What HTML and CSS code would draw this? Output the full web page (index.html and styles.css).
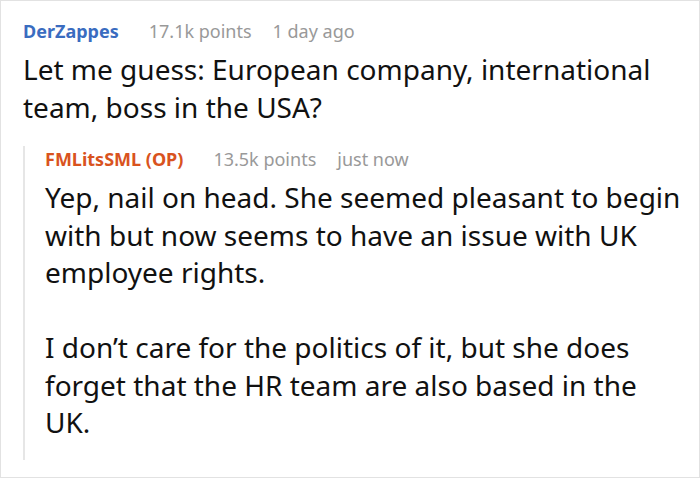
FILE: index.html
```html
<!DOCTYPE html>
<html lang="en">
<head>
    <meta charset="UTF-8">
    <title>Comment thread</title>
    <link rel="stylesheet" href="styles.css">
</head>
<body>

<div class="thread">
    <div class="comment">
        <div class="meta">
            <span class="author">DerZappes</span>
            <span class="points">17.1k points</span>
            <span class="time">1 day ago</span>
        </div>
        <p class="text">Let me guess: European company, international team, boss in the USA?</p>

        <!-- reply from OP -->
        <div class="reply">
            <div class="meta">
                <span class="author op">FMLitsSML (OP)</span>
                <span class="points">13.5k points</span>
                <span class="time">just now</span>
            </div>
            <p class="text">Yep, nail on head. She seemed pleasant to begin with but now seems to have an issue with UK employee rights.</p>
            <p class="text">I don’t care for the politics of it, but she does forget that the HR team are also based in the UK.</p>
        </div>
    </div>
</div>

</body>
</html>
```

FILE: styles.css
```css
body {
    margin: 0;
    font-family: "Noto Sans", sans-serif;
    background: #fff;
}
.thread {
    width: 698px;
    height: 476px;
    border: 1px solid #e2e2e2;
    overflow: hidden;
}
.comment {
    padding: 17px 15px 0 22px;
}
.meta {
    display: flex;
    align-items: baseline;
    font-size: 18px;
    line-height: 26px;
}
.author {
    font-weight: bold;
    color: #3a6cc0;
    margin-right: 30px;
}
.author.op {
    color: #d9531e;
}
.points {
    color: #999;
    margin-right: 21px;
}
.time {
    color: #999;
}
.text {
    margin: 7px 0 0;
    font-size: 28px;
    line-height: 37.5px;
    color: #111;
}
.reply {
    border-left: 2px solid #e6e6e6;
    padding-left: 20px;
    margin-top: 20px;
    padding-bottom: 18px;
}
.reply .text + .text {
    margin-top: 37.5px;
}
```
